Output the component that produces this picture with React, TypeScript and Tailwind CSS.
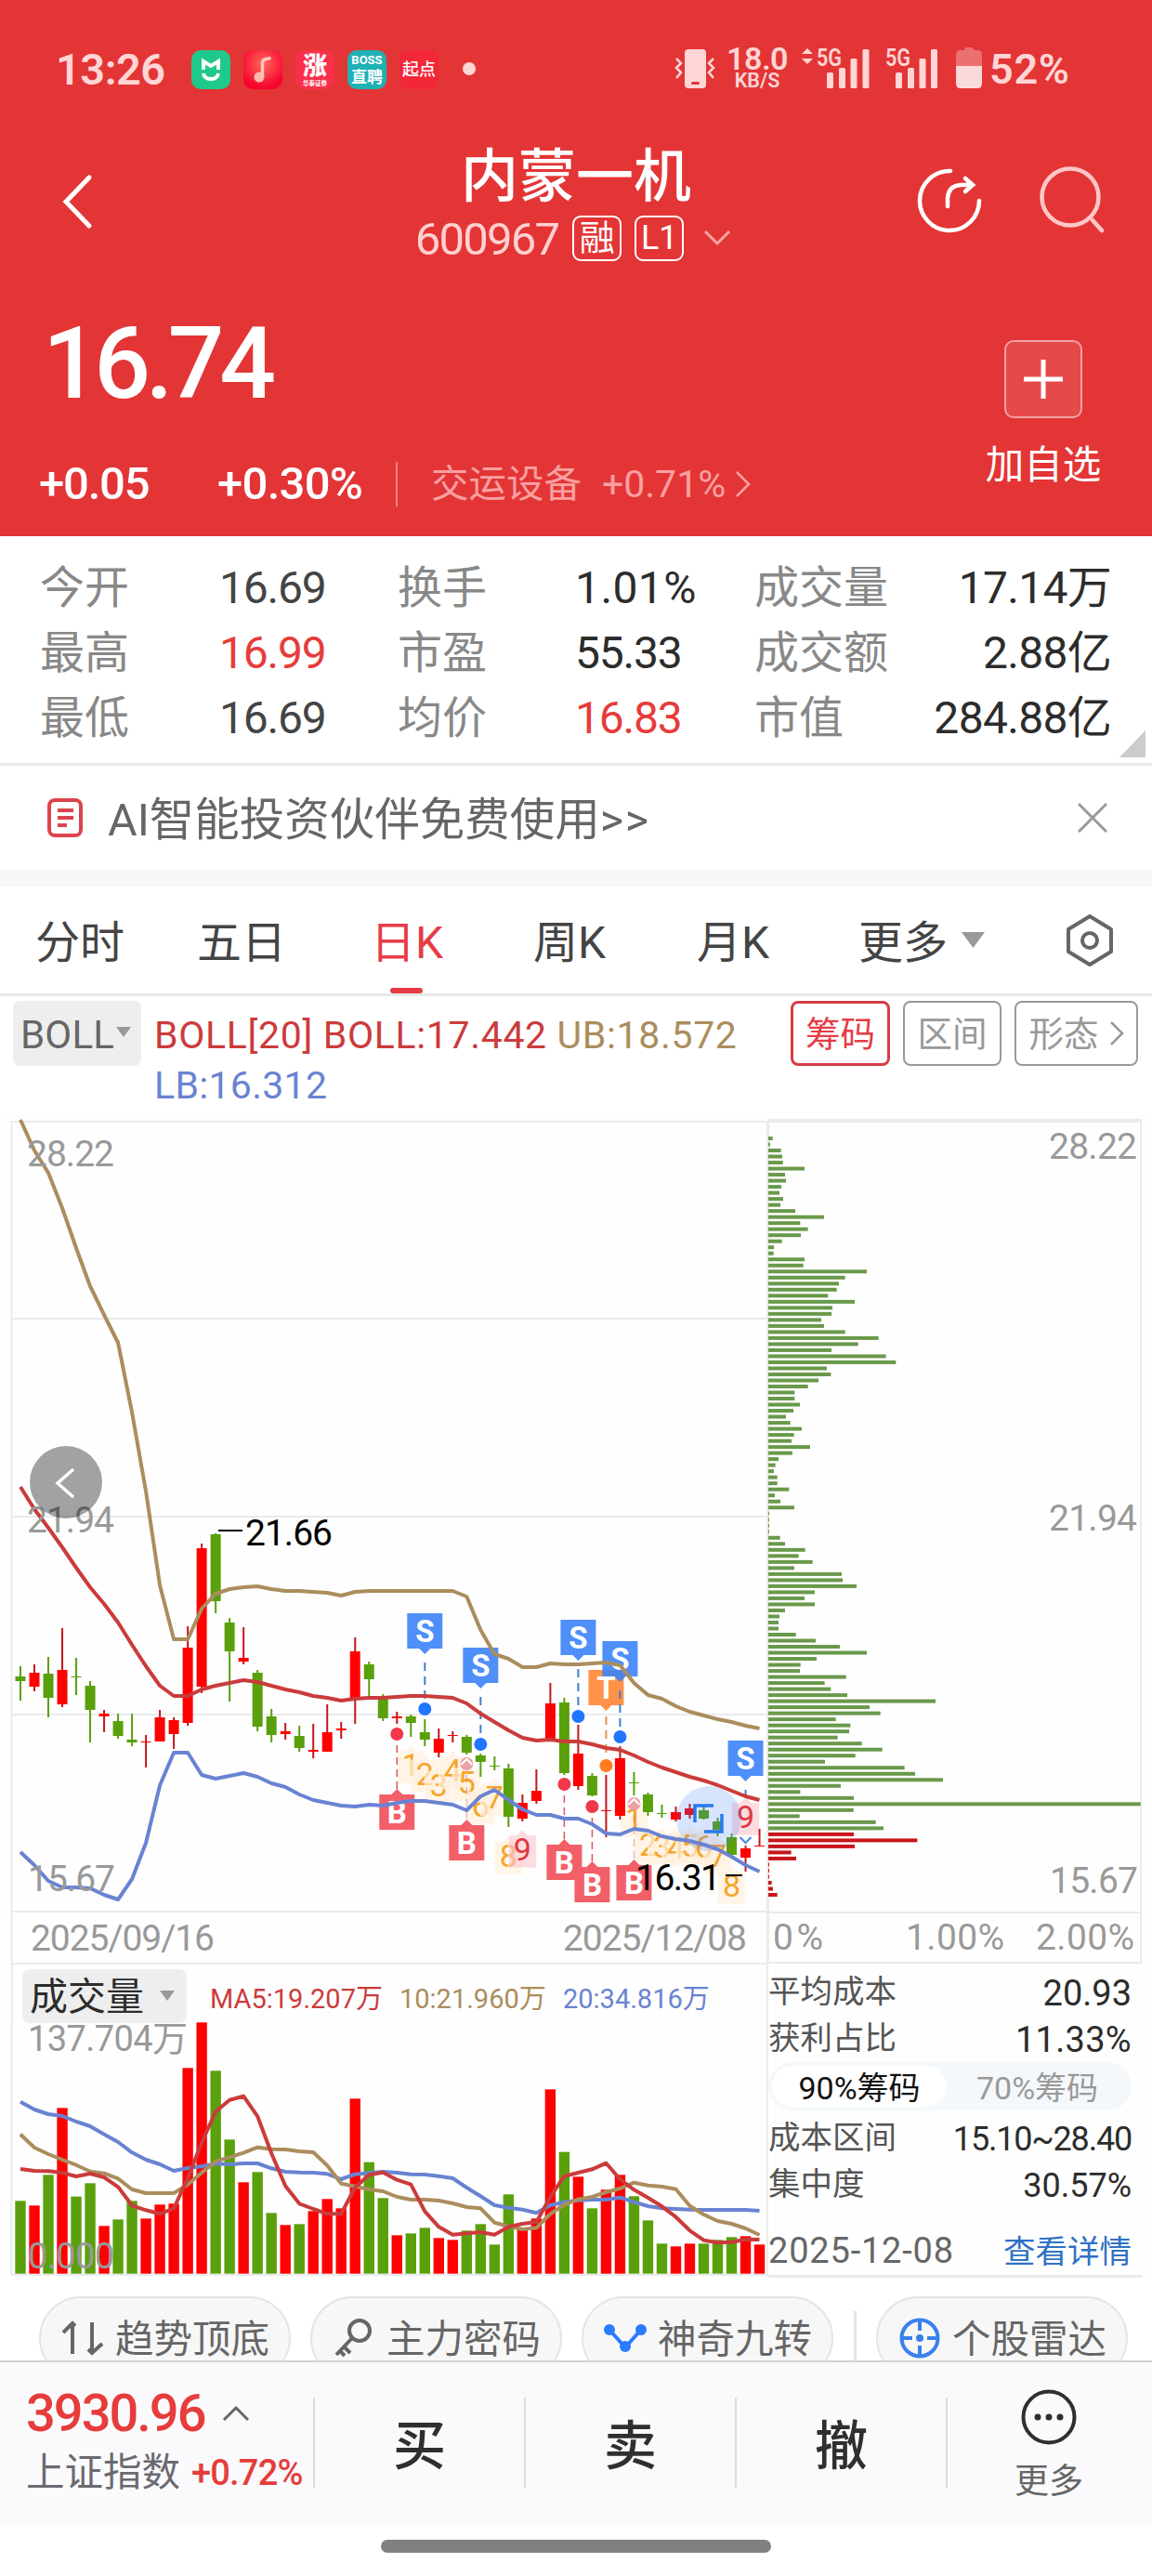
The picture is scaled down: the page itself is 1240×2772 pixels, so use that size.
import React from 'react';

type Candle = [string, number, number, number, number];

const NUM = "Roboto, 'Noto Sans CJK SC', sans-serif";
const STEP = 15.01;
const xAt = (i: number) => 22 + i * STEP;

const RED = '#fe0000';
const GREEN = '#5aa00c';

// [direction, high, body top, body bottom, low]
const candles: Candle[] = [
  ['g', 593, 604, 609, 630], ['r', 591, 600, 615, 620], ['g', 583, 601, 627, 648], ['r', 552, 597, 634, 637],
  ['g', 584, 604, 605, 624], ['g', 609, 614, 640, 675], ['r', 640, 644, 647, 664], ['g', 644, 652, 668, 671],
  ['g', 644, 672, 675, 679], ['r', 667, 674, 675, 702], ['r', 640, 648, 674, 674], ['r', 648, 651, 666, 682],
  ['r', 550, 573, 654, 657], ['r', 461, 466, 615, 622], ['g', 450, 451, 523, 536], ['g', 541, 546, 577, 631],
  ['r', 551, 584, 588, 591], ['g', 597, 600, 658, 663], ['g', 639, 647, 667, 675], ['r', 654, 663, 666, 672],
  ['g', 657, 668, 681, 685], ['r', 655, 683, 685, 692], ['r', 634, 664, 685, 685], ['r', 653, 660, 662, 671],
  ['r', 562, 577, 628, 655], ['g', 588, 591, 607, 627], ['g', 623, 625, 649, 652], ['r', 642, 647, 649, 655],
  ['g', 645, 647, 654, 669], ['g', 650, 664, 672, 679], ['r', 660, 671, 686, 691], ['r', 663, 667, 668, 675],
  ['g', 667, 669, 686, 688], ['g', 687, 689, 696, 712], ['g', 690, 700, 701, 705], ['g', 698, 703, 755, 766],
  ['r', 731, 740, 757, 760], ['r', 704, 727, 738, 741], ['r', 611, 633, 671, 672], ['g', 627, 632, 708, 710],
  ['r', 656, 687, 722, 726], ['g', 708, 711, 732, 733], ['r', 710, 748, 749, 777], ['r', 679, 692, 754, 758],
  ['g', 707, 718, 719, 732], ['g', 729, 731, 750, 754], ['g', 742, 751, 752, 756], ['r', 744, 750, 758, 760],
  ['r', 741, 746, 753, 757], ['g', 744, 748, 757, 758], ['g', 756, 760, 769, 776], ['g', 773, 777, 796, 798],
  ['r', 786, 789, 799, 814], ['r', 768, 786, 787, 787],
];

const upper = [5, 38, 62, 100, 143, 184, 215, 245, 320, 405, 506, 564, 564, 531, 515, 510, 508, 507, 510, 512, 512, 513, 514, 517, 513, 512, 512, 512, 512, 512, 512, 512, 518, 554, 580, 585, 594, 594, 590, 591, 591, 590, 589, 592, 611, 624, 628, 636, 642, 646, 650, 653, 657, 660];
const middle = [400, 424, 444, 465, 487, 508, 526, 546, 570, 593, 614, 625, 625, 618, 614, 611, 608, 610, 614, 618, 621, 625, 627, 630, 628, 627, 627, 626, 625, 625, 626, 627, 633, 644, 653, 662, 670, 673, 672, 674, 674, 677, 681, 683, 689, 696, 702, 707, 712, 716, 721, 727, 733, 737];
const lower = [793, 807, 824, 831, 831, 832, 839, 844, 822, 783, 721, 686, 686, 710, 714, 711, 708, 712, 719, 723, 731, 737, 740, 743, 744, 742, 743, 740, 738, 738, 740, 742, 748, 733, 726, 737, 747, 753, 753, 757, 757, 763, 773, 774, 768, 770, 776, 779, 781, 785, 790, 798, 807, 814];

// volume series share one scale: 1043 is the zero line, three units per pixel
const volumes = [808, 823, 724, 508, 794, 751, 889, 868, 808, 865, 820, 817, 379, 232, 388, 610, 748, 715, 847, 886, 883, 841, 802, 832, 478, 683, 799, 919, 913, 895, 928, 934, 904, 883, 949, 787, 895, 865, 448, 650, 730, 832, 772, 724, 793, 871, 946, 955, 946, 946, 934, 925, 922, 949];
const ma5 = [705, 711, 712, 717, 729, 720, 732, 763, 823, 838, 850, 832, 735, 620, 520, 482, 470, 535, 655, 760, 817, 834, 850, 850, 765, 724, 716, 740, 755, 842, 892, 917, 913, 909, 917, 892, 882, 876, 795, 728, 717, 706, 686, 738, 772, 798, 826, 860, 904, 935, 943, 941, 932, 933];
const ma10 = [593, 636, 657, 675, 692, 713, 719, 736, 771, 783, 783, 783, 755, 717, 680, 667, 653, 635, 641, 642, 648, 651, 694, 752, 761, 771, 777, 795, 804, 804, 807, 816, 828, 832, 878, 890, 900, 895, 850, 820, 803, 795, 780, 768, 749, 758, 762, 770, 824, 852, 873, 882, 897, 918];
const ma20 = [488, 513, 528, 534, 552, 567, 593, 618, 652, 675, 690, 711, 702, 697, 688, 690, 687, 687, 703, 714, 716, 717, 721, 738, 722, 718, 714, 717, 722, 723, 728, 735, 765, 793, 822, 830, 836, 847, 822, 812, 806, 804, 804, 797, 812, 825, 832, 834, 836, 837, 837, 837, 837, 840];

const chips = [
  35, 27, 62, 66, 68, 138, 75, 78, 63, 57, 69, 60, 108, 201, 124, 149, 126, 65, 39, 38, 138, 134, 339, 269, 249, 242, 214, 300, 228, 225,
  192, 201, 269, 377, 311, 225, 401, 433, 210, 223, 183, 149, 106, 106, 123, 102, 78, 92, 129, 104, 96, 156, 99, 54, 44, 39, 50, 50, 88, 42,
  60, 105, 24, 24, 24, 24, 59, 75, 140, 119, 164, 105, 258, 261, 306, 171, 138, 171, 75, 57, 54, 54, 110, 174, 252, 339, 177, 125, 123, 272,
  203, 223, 276, 561, 348, 383, 239, 286, 282, 245, 323, 389, 302, 204, 461, 495, 585, 255, 124, 297, 1223, 296, 122, 368, 393,
  297, 502, 300, 95, 111, 24, 24, 24, 32, 36, 50,
];

const sells = [
  { i: 29, top: 536, dot: 639 },
  { i: 33, top: 573, dot: 677 },
  { i: 40, top: 543, dot: 647 },
  { i: 43, top: 566, dot: 669 },
  { i: 52, top: 673, dot: 0 },
];
const buys = [
  { i: 27, top: 731, dot: 666, faded: false },
  { i: 32, top: 764, dot: 698, faded: true },
  { i: 39, top: 785, dot: 720, faded: false },
  { i: 41, top: 809, dot: 744, faded: false },
  { i: 44, top: 807, dot: 741, faded: true },
];
const counts: [number, number, number][] = [
  [28, 1, 699], [29, 2, 709], [30, 3, 721], [31, 4, 705], [32, 5, 718], [33, 6, 743], [34, 7, 734], [35, 8, 797], [36, 9, 790],
  [44, 1, 757], [45, 2, 785], [46, 3, 787], [47, 4, 788], [48, 5, 786], [49, 6, 787], [50, 7, 797], [51, 8, 829], [52, 9, 755],
];

const toPoints = (data: number[], map: (v: number) => number = (v) => v) =>
  data.map((v, i) => `${xAt(i).toFixed(1)},${map(v).toFixed(1)}`).join(' ');

const ChartText: React.FC<{ x: number; y: number; w: number; size?: number; fill?: string; children: string }> = ({
  x, y, w, size = 39, fill = '#999999', children,
}) => (
  <text x={x} y={y} textLength={w} fontSize={size} fill={fill} fontFamily={NUM}>{children}</text>
);

const StatusBar: React.FC = () => (
  <div className="flex h-[150px] items-start pt-[54px] text-[#ffd5d5]">
    <div className="ml-[60px] w-[146px] text-[47px] leading-[42px] font-semibold tracking-[-0.5px]">13:26</div>
    <div className="flex gap-[14px]">
      <svg width="42" height="42" viewBox="0 0 42 42">
        <rect width="42" height="42" rx="10" fill="#1fc98b" />
        <path d="M13 21V12l8 5 8-5v9M13 25c1 8 15 8 16 0" fill="none" stroke="#fff" strokeWidth="4" />
      </svg>
      <svg width="42" height="42" viewBox="0 0 42 42">
        <defs>
          <radialGradient id="music" cx="50%" cy="35%" r="60%">
            <stop offset="0" stopColor="#ff6a5c" />
            <stop offset="1" stopColor="#f5062f" />
          </radialGradient>
        </defs>
        <rect width="42" height="42" rx="10" fill="url(#music)" />
        <circle cx="17" cy="29" r="5.5" fill="#ffb9ae" />
        <path d="M20.500 29V14q0-4 4-4.500l5-1" fill="none" stroke="#ffc4bb" strokeWidth="3.500" />
      </svg>
      <div className="flex h-[42px] w-[42px] flex-col items-center rounded-[10px] bg-[#f9304a] pt-[3px] text-white">
        <span className="text-[26px] leading-[29px] font-black">涨</span>
        <span className="text-[6.500px] leading-[9px] font-bold whitespace-nowrap">华泰证券</span>
      </div>
      <div className="flex h-[42px] w-[42px] flex-col items-center rounded-[10px] bg-[#1fb1b4] pt-[3px] text-white">
        <span className="text-[13px] leading-[16px] font-bold">BOSS</span>
        <span className="text-[17px] leading-[20px] font-bold">直聘</span>
      </div>
      <div className="flex h-[42px] w-[42px] items-center justify-center rounded-[10px] bg-[#f22738] text-[18px] leading-none font-medium text-white">
        起点
      </div>
    </div>
    <div className="mt-[13px] ml-[26px] h-[14px] w-[14px] rounded-full bg-[#ffd5d5]" />
    <svg className="-mt-[4px] ml-[214px]" width="44" height="46" viewBox="0 0 44 46">
      <rect x="11" y="3" width="23" height="42" rx="4" fill="#ffd5d5" />
      <rect x="18" y="38" width="9" height="3" rx="1.500" fill="#e33536" />
      <path d="M2 13l5 5-5 5 5 5-5 6M42 13l-5 5 5 5-5 5 5 6" fill="none" stroke="#ffd5d5" strokeWidth="2.500" />
    </svg>
    <div className="-mt-[4px] ml-[10px] flex w-[70px] flex-col items-center">
      <span className="text-[34px] leading-[27px] font-semibold tracking-[-0.5px]">18.0</span>
      <span className="text-[21.500px] leading-[19px] font-semibold">KB/S</span>
    </div>
    <svg className="-mt-[4px] ml-[13px]" width="146" height="46" viewBox="0 0 146 46">
      <path d="M6 2l6 6H0zM6 19l6-6H0z" fill="#ffd5d5" />
      <g fill="#ffd5d5">
        <rect x="27" y="28" width="7" height="17" rx="1.500" />
        <rect x="40" y="23" width="7" height="22" rx="1.500" />
        <rect x="52.500" y="13" width="7" height="32" rx="1.500" />
        <rect x="65.500" y="3" width="7" height="42" rx="1.500" />
        <rect x="101" y="28" width="7" height="17" rx="1.500" />
        <rect x="114" y="23" width="7" height="22" rx="1.500" />
        <rect x="126.500" y="13" width="7" height="32" rx="1.500" />
        <rect x="139" y="3" width="7" height="42" rx="1.500" />
        <text x="16" y="21" fontSize="25" fontWeight="600" textLength="27" lengthAdjust="spacingAndGlyphs" fontFamily={NUM}>5G</text>
        <text x="90" y="21" fontSize="25" fontWeight="600" textLength="27" lengthAdjust="spacingAndGlyphs" fontFamily={NUM}>5G</text>
      </g>
    </svg>
    <svg className="-mt-[4px] ml-[20px]" width="28" height="46" viewBox="0 0 28 46">
      <path d="M9 4q0-3 3-3h4q3 0 3 3h4q5 0 5 5v12H0V9q0-5 5-5z" fill="#ed7071" />
      <path d="M0 21h28v19q0 5-5 5H5q-5 0-5-5z" fill="#f9d9d9" />
    </svg>
    <div className="ml-[8px] text-[45px] leading-[42px] font-semibold tracking-[0.7px]">52%</div>
  </div>
);

const TitleBar: React.FC = () => (
  <div className="grid h-[150px] grid-cols-[420px_1fr_420px]">
    <svg className="mt-[36px] ml-[64px]" width="40" height="62" viewBox="0 0 40 62" fill="none" stroke="#fff" strokeWidth="5" strokeLinecap="round">
      <path d="M32 5L7 31l25 26" />
    </svg>
    <div className="flex flex-col items-center">
      <h1 className="mt-[10px] text-[62px] leading-[62px] font-medium text-white">内蒙一机</h1>
      <div className="mt-[9px] -ml-[6px] flex items-center text-white">
        <span className="pt-[4px] text-[49px] leading-[46px] tracking-[-1.8px] text-[#ffd0d0]">600967</span>
        <span className="ml-[15px] flex h-[49px] w-[53px] items-center justify-center rounded-[9px] border-2 border-white text-[38px] leading-none">融</span>
        <span className="ml-[14px] flex h-[49px] w-[53px] items-center justify-center rounded-[9px] border-2 border-white text-[36px] leading-none">L1</span>
        <svg className="ml-[21px]" width="30" height="18" viewBox="0 0 30 18" fill="none" stroke="#f7a3a3" strokeWidth="3">
          <path d="M2 2l13 13L28 2" />
        </svg>
      </div>
    </div>
    <div className="flex pt-[26px] pl-[164px]">
      <svg width="76" height="80" viewBox="0 0 76 80" fill="none" stroke="#fff" strokeWidth="4.500" strokeLinecap="round">
        <path d="M39 8a32 32 0 1 0 31 32" />
        <path d="M36 46v-9q1-13 14-14h12M55 16l8 7-8 7" />
      </svg>
      <svg className="ml-[54px]" width="76" height="80" viewBox="0 0 76 80" fill="none" stroke="#ffc7c7" strokeWidth="4.500" strokeLinecap="round">
        <circle cx="38" cy="36" r="30.500" />
        <path d="M62 61l10 11" />
      </svg>
    </div>
  </div>
);

const Quote: React.FC = () => (
  <div className="flex justify-between">
    <div className="flex flex-col pl-[42px] text-white">
      <div className="mt-[38px] pl-[4px] text-[107px] leading-[107px] font-medium tracking-[-5.500px]">16.74</div>
      <div className="mt-[51px] flex items-center font-medium">
        <span className="w-[192px] text-[49px] leading-[50px] tracking-[-1.200px]">+0.05</span>
        <span className="w-[192px] text-[49px] leading-[50px] tracking-[-0.700px]">+0.30%</span>
        <span className="h-[48px] w-[2px] bg-[#ee8080]" />
        <span className="ml-[36px] text-[40.500px] leading-[50px] font-normal text-[#f9a0a1]">交运设备</span>
        <span className="ml-[22px] text-[41px] leading-[50px] font-normal text-[#f9a0a1]">+0.71%</span>
        <svg className="ml-[10px]" width="18" height="30" viewBox="0 0 18 30" fill="none" stroke="#f9a0a1" strokeWidth="2.500">
          <path d="M2 2l13 13L2 28" />
        </svg>
      </div>
    </div>
    <div className="mr-[55px] flex w-[124px] flex-col items-center pt-[66px] text-white">
      <div className="flex h-[84px] w-[84px] items-center justify-center rounded-[10px] border-2 border-[#f3a0a0] bg-[#e64949]">
        <svg width="42" height="42" viewBox="0 0 42 42" stroke="#fff" strokeWidth="5">
          <path d="M21 0v42M0 21h42" />
        </svg>
      </div>
      <span className="mt-[29px] text-[41.500px] leading-[44px] whitespace-nowrap">加自选</span>
    </div>
  </div>
);

const stats = [
  ['今开', '16.69', 'tracking-[-1.2px] text-[#444444]', '换手', '1.01%', 'tracking-[0.4px] text-[#2c2c2c]', '成交量', '17.14万'],
  ['最高', '16.99', 'tracking-[-1.2px] text-[#e63c3b]', '市盈', '55.33', 'tracking-[-1.2px] text-[#2c2c2c]', '成交额', '2.88亿'],
  ['最低', '16.69', 'tracking-[-1.2px] text-[#444444]', '均价', '16.83', 'tracking-[-1.2px] text-[#e63c3b]', '市值', '284.88亿'],
];

const Stats: React.FC = () => (
  <div className="relative h-[247px] border-b-[3px] border-[#ececec] bg-white pt-[21px] text-[48px] leading-[70px]">
    {stats.map((row) => (
      <div key={row[0]} className="grid grid-cols-[193px_192px_191px_193px_1fr] pr-[44px] pl-[43px] text-[#888888]">
        <span>{row[0]}</span>
        <span className={row[2]}>{row[1]}</span>
        <span>{row[3]}</span>
        <span className={row[5]}>{row[4]}</span>
        <span className="flex justify-between">
          <span>{row[6]}</span>
          <span className="tracking-[-0.700px] text-[#2c2c2c]">{row[7]}</span>
        </span>
      </div>
    ))}
    <svg className="absolute right-[7px] bottom-[6px]" width="28" height="29">
      <path d="M28 0v29H0z" fill="#cccccc" />
    </svg>
  </div>
);

const Notice: React.FC = () => (
  <div className="flex h-[112px] items-center bg-white pl-[50px]">
    <svg width="40" height="44" viewBox="0 0 40 44" fill="none" stroke="#dc444c" strokeWidth="4">
      <rect x="3" y="3" width="34" height="38" rx="6" />
      <path d="M12 14h17M12 22h17M12 30h10" />
    </svg>
    <span className="ml-[26px] pt-[6px] text-[48.500px] leading-none text-[#666666]">AI智能投资伙伴免费使用<span className="tracking-[1.500px]">&gt;&gt;</span></span>
    <svg className="mr-[48px] ml-auto" width="32" height="32" viewBox="0 0 32 32" stroke="#999" strokeWidth="3">
      <path d="M1 1l30 30M31 1L1 31" />
    </svg>
  </div>
);

const Tabs: React.FC = () => (
  <div className="flex h-[118px] items-center border-b-[3px] border-[#e8e8e8] bg-white pl-[38px] text-[48px] leading-none text-[#444444]">
    <span className="w-[174px] pt-[6px]">分时</span>
    <span className="w-[187px] pt-[6px]">五日</span>
    <span className="flex h-full w-[175px] flex-col text-[#e63c46]">
      <span className="flex flex-1 items-center pt-[12px]">日K</span>
      <span className="ml-[21px] h-[6px] w-[35px] rounded-[3px] bg-[#e63c46]" />
    </span>
    <span className="w-[176px] pt-[6px]">周K</span>
    <span className="w-[174px] pt-[6px]">月K</span>
    <span className="pt-[6px]">更多</span>
    <svg className="ml-[15px]" width="25" height="17">
      <path d="M0 0h25L12.500 17z" fill="#999" />
    </svg>
    <svg className="ml-[87px]" width="52" height="58" viewBox="0 0 52 58" fill="none" stroke="#666" strokeWidth="4" strokeLinejoin="round">
      <path d="M26 3l23 14v24L26 55 3 41V17z" />
      <circle cx="26" cy="29" r="8" />
    </svg>
  </div>
);

const IndicatorBar: React.FC = () => (
  <div className="flex h-[128px] bg-white pt-[5px] pl-[14px]">
    <div className="flex h-[70px] w-[138px] items-center rounded-[8px] bg-[#eeeeee] pt-[3px] pl-[8px] text-[42px] tracking-[0.2px] text-[#666666]">
      BOLL
      <svg className="-mt-[6px] ml-[2px]" width="16" height="11">
        <path d="M0 0h16L8 11z" fill="#999" />
      </svg>
    </div>
    <div className="mt-[10px] ml-[14px] w-[685px] text-[41px] leading-[54px] tracking-[0.650px]">
      <span className="text-[#cb3b3b]">BOLL[20] BOLL:17.442</span> <span className="text-[#ab8d5d]">UB:18.572</span>
      <div className="tracking-[0.300px] text-[#6983d2]">LB:16.312</div>
    </div>
    <div className="flex gap-[14px] text-[37.500px] leading-none text-[#999999]">
      <span className="flex h-[70px] w-[107px] items-center justify-center rounded-[8px] border-[3px] border-[#d63c46] pt-[4px] text-[#e63c46]">筹码</span>
      <span className="flex h-[70px] w-[106px] items-center justify-center rounded-[8px] border-2 border-[#999999] pt-[4px]">区间</span>
      <span className="flex h-[70px] w-[133px] items-center justify-center rounded-[8px] border-2 border-[#999999] pt-[4px]">
        形态
        <svg className="-mt-[4px] ml-[12px]" width="15" height="26" viewBox="0 0 15 26" fill="none" stroke="#999" strokeWidth="2.500">
          <path d="M1 1l12 12L1 25" />
        </svg>
      </span>
    </div>
  </div>
);

const PriceChart: React.FC = () => (
  <svg width="827" height="915" viewBox="0 0 827 915">
    <g stroke="#ebebeb" strokeWidth="2" fill="none">
      <path d="M12 7H826M12 219H826M12 432H826M12 645H826M12 857H826M12 913H826M12.500 6V915M826 6V915" />
    </g>

    {counts.map(([i, n, y]) => {
      const x = xAt(i);
      const nine = n === 9;
      return (
        <g key={i}>
          <path
            d={`M${x - 15} ${y - 15}h9l6-6 6 6h9v35h-30z`}
            fill={nine ? '#fbc4cb' : '#fff0dc'}
            fillOpacity={nine ? 0.6 : 0.7}
            stroke="#fff"
            strokeOpacity="0.6"
          />
          <text x={x} y={y + 12} textAnchor="middle" fontSize="34" fill={nine ? '#dd3540' : '#f5a52c'} fontFamily={NUM}>{n}</text>
        </g>
      );
    })}

    {buys.map(({ i, top, dot, faded }) => {
      const x = xAt(i);
      return (
        <g key={i}>
          <path d={`M${x} ${dot + 12}V${top - 6}`} stroke="#dd5560" strokeWidth="1.500" strokeDasharray="8 5" opacity={faded ? 0.4 : 1} />
          <path d={`M${x - 19} ${top}h13l6-6 6 6h13v38h-38z`} fill="#f35f68" />
          <text x={x} y={top + 31} textAnchor="middle" fontSize="33" fontWeight="700" fill="#fff" fontFamily={NUM}>B</text>
          <circle cx={x} cy={dot} r="7" fill={faded ? '#eba0a4' : '#f0384a'} />
          {faded && <path d={`M${x - 6} ${dot + 1}l6-6 6 6`} stroke="#fff" strokeWidth="2" fill="none" />}
        </g>
      );
    })}

    <path d={`M${xAt(42)} 647V690`} stroke="#e09550" strokeWidth="2" strokeDasharray="9 6" />
    <path d={`M${xAt(42) - 19} 597h38v38h-13l-6 6-6-6h-13z`} fill="#ff9248" />
    <text x={xAt(42)} y="628" textAnchor="middle" fontSize="33" fontWeight="700" fill="#fff" fontFamily={NUM}>T</text>

    {sells.map(({ i, top, dot }) => {
      const x = xAt(i);
      return (
        <g key={i}>
          <path d={`M${x - 19} ${top}h38v38h-13l-6 6-6-6h-13z`} fill="#3c83f8" fillOpacity="0.9" />
          <text x={x} y={top + 31} textAnchor="middle" fontSize="33" fontWeight="700" fill="#fff" fontFamily={NUM}>S</text>
          <path d={`M${x} ${top + 53}V${dot || top + 65}`} stroke="#3f7fd0" strokeWidth="2" strokeDasharray="9 6" />
        </g>
      );
    })}

    {candles.map(([dir, high, top, bottom, low], i) => {
      const color = dir === 'r' ? RED : GREEN;
      return (
        <g key={i}>
          <rect x={xAt(i) - 1} y={high} width="2" height={low - high} fill={dir === 'r' ? '#c4171b' : GREEN} />
          <rect x={xAt(i) - 5.5} y={top} width="11" height={Math.max(bottom - top, 1)} fill={color} />
        </g>
      );
    })}

    <circle cx="763" cy="757" r="35" fill="#3b7bff" fillOpacity="0.2" />
    <path d="M748 761V743H768M758 771H777V752" fill="none" stroke="#2a78f0" strokeWidth="3.500" />
    <path d={`M${xAt(52) - 6} 777l6 6 6-6`} fill="none" stroke="#4c86d8" strokeWidth="2" />

    <g fill="none" strokeWidth="4" strokeLinejoin="round">
      <polyline points={toPoints(upper)} stroke="#ab8d5d" />
      <polyline points={toPoints(middle)} stroke="#cb3b3b" />
      <polyline points={toPoints(lower)} stroke="#6983d2" />
    </g>

    {sells.filter((s) => s.dot > 0).map((s) => (
      <circle key={s.i} cx={xAt(s.i)} cy={s.dot} r="7" fill="#2176ff" />
    ))}
    <circle cx={xAt(42)} cy="700" r="7" fill="#ff7d1f" />

    <ChartText x={29} y={55} w={94}>28.22</ChartText>
    <ChartText x={29} y={449} w={94}>21.94</ChartText>
    <ChartText x={30} y={835} w={94}>15.67</ChartText>
    <ChartText x={33} y={899} w={198}>2025/09/16</ChartText>
    <ChartText x={606} y={899} w={198}>2025/12/08</ChartText>

    <circle cx="71" cy="395" r="39" fill="#000" fillOpacity="0.36" />
    <path d="M79 381L62 396l17 15" fill="none" stroke="#fff" strokeWidth="3.500" />

    <path d="M235 447h26M781 818h18" stroke="#000" strokeWidth="2" />
    <ChartText x={264} y={463} w={94} fill="#000">21.66</ChartText>
    <ChartText x={684} y={834} w={92} fill="#000">16.31</ChartText>
  </svg>
);

const ChipChart: React.FC = () => (
  <svg width="413" height="915" viewBox="827 0 413 915">
    <g fill="none" stroke="#ebebeb">
      <path d="M826 6H1229" strokeWidth="4" />
      <path d="M827 6V912M1228 6V912M826 858H1229M826 912H1229" strokeWidth="2" />
    </g>
    {chips.map((end, i) => (
      <rect key={i} x="826" y={23 + i * 6.512} width={(end - 18) / 3} height="4" fill={i < 115 ? '#69994a' : '#c8161a'} />
    ))}
    <ChartText x={1129} y={47} w={95}>28.22</ChartText>
    <ChartText x={1129} y={447} w={95}>21.94</ChartText>
    <ChartText x={1130} y={837} w={95}>15.67</ChartText>
    <ChartText x={832} y={898} w={54}>0%</ChartText>
    <ChartText x={975} y={898} w={106}>1.00%</ChartText>
    <ChartText x={1115} y={898} w={106}>2.00%</ChartText>
  </svg>
);

const volY = (v: number) => (v - 234) / 3;

const VolumeChart: React.FC = () => (
  <div className="flex w-[827px] flex-col">
    <div className="ml-[12px] flex h-[63px] items-start border-l-2 border-[#ebebeb] pt-[4px] pl-[10px]">
      <div className="flex h-[58px] w-[177px] items-center rounded-[8px] bg-[#eeeeee] pt-[3px] pl-[8px] text-[41px] leading-none text-[#2c2c2c]">
        成交量
        <svg className="-mt-[4px] ml-[17px]" width="16" height="11">
          <path d="M0 0h16L8 11z" fill="#999" />
        </svg>
      </div>
      <span className="mt-[12px] ml-[25px] w-[204px] text-[29px] leading-[40px] text-[#cb3b3b]">MA5:19.207万</span>
      <span className="mt-[12px] w-[176px] text-[29px] leading-[40px] text-[#ab8d5d]">10:21.960万</span>
      <span className="mt-[12px] text-[29px] leading-[40px] text-[#6983d2]">20:34.816万</span>
    </div>
    <svg width="827" height="273" viewBox="0 0 827 273" className="overflow-visible">
      <path d="M12.500 0V271M12 271H827M826 -62V271" stroke="#ebebeb" strokeWidth="2" />
      {volumes.map((v, i) => (
        <rect key={i} x={xAt(i) - 5.7} y={volY(v)} width="11.400" height={(1043 - v) / 3} fill={candles[i][0] === 'r' ? RED : GREEN} />
      ))}
      <g fill="none" strokeWidth="4" strokeLinejoin="round">
        <polyline points={toPoints(ma20, volY)} stroke="#6983d2" />
        <polyline points={toPoints(ma10, volY)} stroke="#ab8d5d" />
        <polyline points={toPoints(ma5, volY)} stroke="#cb3b3b" />
      </g>
      <ChartText x={30} y={30} w={172} size={38}>137.704万</ChartText>
      <ChartText x={30} y={264} w={93} size={38}>0.000</ChartText>
    </svg>
  </div>
);

const InfoRow: React.FC<{ label: string; value: string; valueClass: string }> = ({ label, value, valueClass }) => (
  <div className="flex h-[50px] items-center justify-between">
    <span className="text-[34.500px] leading-none text-[#555555]">{label}</span>
    <span className={`pt-[3px] leading-none text-[#2c2c2c] ${valueClass}`}>{value}</span>
  </div>
);

const ChipInfo: React.FC = () => (
  <div className="mr-[11px] flex h-[336px] flex-1 flex-col border-b-[3px] border-[#ebebeb] pt-[3px] pr-[12px]">
    <InfoRow label="平均成本" value="20.93" valueClass="text-[38px]" />
    <InfoRow label="获利占比" value="11.33%" valueClass="text-[38px] tracking-[0.3px]" />
    <div className="mt-[1px] flex h-[52px] w-[391px] items-center rounded-full bg-[#f4f8fb] p-[4px] text-[34px] leading-none">
      <span className="flex h-[44px] w-[188px] items-center justify-center rounded-full bg-white pt-[3px] text-[#111111]">90%筹码</span>
      <span className="flex flex-1 items-center justify-center pt-[3px] text-[#999999]">70%筹码</span>
    </div>
    <div className="mt-[4px]">
      <InfoRow label="成本区间" value="15.10~28.40" valueClass="text-[36px] tracking-[-1.200px]" />
      <InfoRow label="集中度" value="30.57%" valueClass="text-[36px]" />
    </div>
    <div className="mt-[22px] flex h-[50px] items-center justify-between leading-none">
      <span className="text-[38px] tracking-[0.800px] text-[#666666]">2025-12-08</span>
      <span className="pt-[2px] text-[34.500px] text-[#2f72c4]">查看详情</span>
    </div>
  </div>
);

const Pill: React.FC<{ label: string; children: React.ReactNode }> = ({ label, children }) => (
  <div className="flex h-[90px] w-[271px] shrink-0 items-center rounded-full border-2 border-[#e5e5e5] bg-[#f7f7f7] pl-[22px] text-[41.500px] leading-none text-[#666666]">
    <svg className="mr-[12px] shrink-0" width="46" height="46" viewBox="0 0 46 46" fill="none" stroke="#666" strokeWidth="4">
      {children}
    </svg>
    <span className="pt-[4px] whitespace-nowrap">{label}</span>
  </div>
);

const Pills: React.FC = () => (
  <div className="flex h-[90px] overflow-hidden bg-white pt-[21px] pl-[42px]">
    <Pill label="趋势顶底">
      <path d="M12 40V8M2 17l10-10 3 3M33 6v32M44 29L33 39l-4-4" />
    </Pill>
    <div className="w-[21px]" />
    <Pill label="主力密码">
      <circle cx="29" cy="15" r="11" />
      <path d="M21 23L4 41M12 32l7 7M8 37l5 5" />
    </Pill>
    <div className="w-[21px]" />
    <Pill label="神奇九转">
      <path d="M6 14l17 19 17-19" stroke="#2a7bff" />
      <g fill="#2a7bff" stroke="none">
        <circle cx="6" cy="14" r="6" />
        <circle cx="40" cy="14" r="6" />
        <circle cx="23" cy="32" r="6" />
      </g>
    </Pill>
    <div className="mt-[16px] mr-[21px] ml-[22px] h-[80px] w-[3px] bg-[#e5e5e5]" />
    <Pill label="个股雷达">
      <g stroke="#3a80ec">
        <circle cx="23" cy="23" r="19.500" />
        <path d="M23 4v11M23 31v11M4 23h11M31 23h11" />
        <circle cx="23" cy="23" r="4" fill="#3a80ec" stroke="none" />
      </g>
    </Pill>
  </div>
);

const BottomBar: React.FC = () => (
  <div className="flex h-[176px] items-start border-t-2 border-[#d2d2d4] bg-[#fafafc] pt-[38px]">
    <div className="-mt-[8px] w-[337px] pl-[28px]">
      <div className="flex h-[50px] items-center text-[56px] leading-none font-medium tracking-[-2px] text-[#e63c3b]">
        3930.96
        <svg className="ml-[18px]" width="30" height="18" viewBox="0 0 30 18" fill="none" stroke="#666" strokeWidth="3">
          <path d="M2 16L15 3l13 13" />
        </svg>
      </div>
      <div className="mt-[14px] flex h-[50px] items-center">
        <span className="text-[41.500px] leading-none text-[#6a6a70]">上证指数</span>
        <span className="ml-[12px] text-[38px] leading-none font-medium tracking-[-0.800px] text-[#e63c3b]">+0.72%</span>
      </div>
    </div>
    {['买', '卖', '撤'].map((label) => (
      <div key={label} className="flex h-[97px] w-[227px] items-center justify-center border-l-2 border-[#dcdcde] pt-[7px] text-[57px] leading-none font-medium text-[#2f2f2f]">
        {label}
      </div>
    ))}
    <div className="flex h-[97px] flex-1 flex-col items-center border-l-2 border-[#dcdcde] pr-[2px]">
      <svg className="-mt-[10px] shrink-0" width="62" height="62" viewBox="0 0 62 62">
        <circle cx="31" cy="31" r="27.500" fill="none" stroke="#2f2f2f" strokeWidth="4" />
        <g fill="#2f2f2f">
          <circle cx="19" cy="31" r="3.500" />
          <circle cx="31" cy="31" r="3.500" />
          <circle cx="43" cy="31" r="3.500" />
        </g>
      </svg>
      <span className="mt-[18px] text-[37px] leading-[42px] text-[#666666]">更多</span>
    </div>
  </div>
);

const App: React.FC = () => {
  return (
    <div className="h-[2772px] w-[1240px] overflow-hidden bg-white font-[Roboto,'Noto_Sans_CJK_SC',sans-serif]">
      <header className="h-[577px] bg-[#e33536]">
        <StatusBar />
        <TitleBar />
        <Quote />
      </header>
      <Stats />
      <Notice />
      <div className="h-[18px] bg-[#f7f7f7]" />
      <Tabs />
      <IndicatorBar />
      <div className="flex h-[915px] bg-[#fefefe]">
        <PriceChart />
        <ChipChart />
      </div>
      <div className="flex h-[335px] bg-[#fefefe]">
        <VolumeChart />
        <ChipInfo />
      </div>
      <Pills />
      <BottomBar />
      <div className="mx-auto mt-[17px] h-[14px] w-[420px] rounded-full bg-[#808080]" />
    </div>
  );
};

export default App;
